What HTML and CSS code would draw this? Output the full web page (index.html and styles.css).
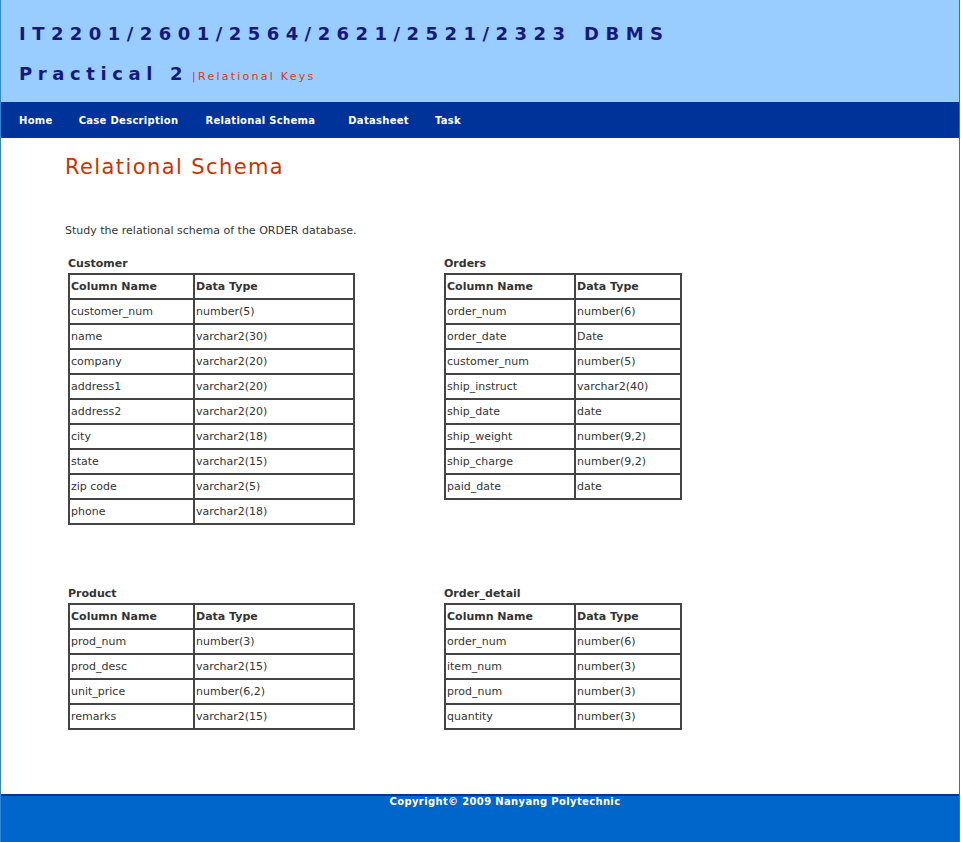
FILE: index.html
```html
<!DOCTYPE html>
<html>
<head>
<meta charset="utf-8">
<title>Relational Schema</title>
<link rel="stylesheet" href="styles.css">
</head>
<body>
<div class="page">
  <header class="masthead">
    <h1 class="course">IT2201/2601/2564/2621/2521/2323 DBMS</h1>
    <div class="practical"><span class="prac-title">Practical 2</span><span class="prac-sub">|Relational Keys</span></div>
  </header>
  <nav class="nav">
    <a class="nav-item" href="#">Home</a>
    <a class="nav-item" href="#">Case Description</a>
    <a class="nav-item" href="#">Relational Schema</a>
    <a class="nav-item" href="#">Datasheet</a>
    <a class="nav-item" href="#">Task</a>
  </nav>
  <main class="content">
    <h2 class="page-title">Relational Schema</h2>
    <p class="intro">Study the relational schema of the ORDER database.</p>
    <div class="schema">
      <section class="entity">
        <div class="entity-name">Customer</div>
        <table class="tbl tbl-a">
          <tr><th>Column Name</th><th>Data Type</th></tr>
          <tr><td>customer_num</td><td>number(5)</td></tr>
          <tr><td>name</td><td>varchar2(30)</td></tr>
          <tr><td>company</td><td>varchar2(20)</td></tr>
          <tr><td>address1</td><td>varchar2(20)</td></tr>
          <tr><td>address2</td><td>varchar2(20)</td></tr>
          <tr><td>city</td><td>varchar2(18)</td></tr>
          <tr><td>state</td><td>varchar2(15)</td></tr>
          <tr><td>zip code</td><td>varchar2(5)</td></tr>
          <tr><td>phone</td><td>varchar2(18)</td></tr>
        </table>
      </section>
      <section class="entity">
        <div class="entity-name">Orders</div>
        <table class="tbl tbl-b">
          <tr><th>Column Name</th><th>Data Type</th></tr>
          <tr><td>order_num</td><td>number(6)</td></tr>
          <tr><td>order_date</td><td>Date</td></tr>
          <tr><td>customer_num</td><td>number(5)</td></tr>
          <tr><td>ship_instruct</td><td>varchar2(40)</td></tr>
          <tr><td>ship_date</td><td>date</td></tr>
          <tr><td>ship_weight</td><td>number(9,2)</td></tr>
          <tr><td>ship_charge</td><td>number(9,2)</td></tr>
          <tr><td>paid_date</td><td>date</td></tr>
        </table>
      </section>
      <section class="entity">
        <div class="entity-name">Product</div>
        <table class="tbl tbl-a">
          <tr><th>Column Name</th><th>Data Type</th></tr>
          <tr><td>prod_num</td><td>number(3)</td></tr>
          <tr><td>prod_desc</td><td>varchar2(15)</td></tr>
          <tr><td>unit_price</td><td>number(6,2)</td></tr>
          <tr><td>remarks</td><td>varchar2(15)</td></tr>
        </table>
      </section>
      <section class="entity">
        <div class="entity-name">Order_detail</div>
        <table class="tbl tbl-b">
          <tr><th>Column Name</th><th>Data Type</th></tr>
          <tr><td>order_num</td><td>number(6)</td></tr>
          <tr><td>item_num</td><td>number(3)</td></tr>
          <tr><td>prod_num</td><td>number(3)</td></tr>
          <tr><td>quantity</td><td>number(3)</td></tr>
        </table>
      </section>
    </div>
  </main>
  <footer class="footer">Copyright&copy; 2009 Nanyang Polytechnic</footer>
</div>
</body>
</html>
```

FILE: styles.css
```css
html, body {
  margin: 0;
  padding: 0;
  background: #ffffff;
}
body {
  font-family: "DejaVu Sans", Verdana, sans-serif;
  font-size: 11px;
  color: #333333;
}
.page {
  width: 958px;
  border-left: 1px solid #2f86d8;
  border-right: 1px solid #3a6fb0;
  display: flex;
  flex-direction: column;
  min-height: 842px;
}
.masthead {
  background: #99ccff;
  height: 102px;
  box-sizing: border-box;
  padding: 22px 0 0 18px;
}
.course {
  margin: 0;
  font-size: 18px;
  line-height: 24px;
  font-weight: bold;
  letter-spacing: 6.45px;
  color: #16197a;
}
.practical {
  margin-top: 17px;
  display: flex;
  align-items: baseline;
}
.prac-title {
  font-size: 18px;
  font-weight: bold;
  letter-spacing: 5.6px;
  color: #16197a;
}
.prac-sub {
  margin-left: 4px;
  font-size: 11px;
  letter-spacing: 2.25px;
  color: #d43a12;
}
.nav {
  background: #003399;
  height: 36px;
  display: flex;
  align-items: center;
  padding-left: 18px;
}
.nav-item {
  color: #ffffff;
  text-decoration: none;
  font-weight: bold;
  font-size: 10px;
  letter-spacing: 0.3px;
  margin-right: 26px;
}
.nav-item:nth-child(2) { margin-right: 27px; }
.nav-item:nth-child(3) { margin-right: 33px; }
.nav-item:nth-child(4) { margin-right: 26px; }
.content {
  flex: 1;
  padding: 15px 0 61px 64px;
}
.page-title {
  margin: 0;
  font-size: 21px;
  line-height: 28px;
  font-weight: normal;
  letter-spacing: 1.4px;
  color: #cc3300;
}
.intro {
  margin: 42px 0 17px 0;
  line-height: 16px;
}
.schema {
  display: grid;
  grid-template-columns: 376px auto;
  row-gap: 61px;
  padding-left: 3px;
  justify-content: start;
}
.entity-name {
  font-weight: bold;
  line-height: 16px;
  margin-bottom: 1px;
}
.tbl {
  border: 1px solid #444444;
  border-spacing: 0;
  border-collapse: separate;
}
.tbl th, .tbl td {
  border: 1px solid #444444;
  height: 23px;
  padding: 0 1px;
  text-align: left;
  vertical-align: middle;
  box-sizing: border-box;
  font-size: 11px;
}
.tbl th { font-weight: bold; }
.tbl-a th:first-child { width: 125px; }
.tbl-a th:last-child { width: 160px; }
.tbl-b th:first-child { width: 130px; }
.tbl-b th:last-child { width: 106px; }
.tbl tr { height: 25px; }
.footer {
  background: #0066cc;
  border-top: 2px solid #003399;
  height: 46px;
  box-sizing: content-box;
  color: #ffffff;
  font-weight: bold;
  font-size: 10px;
  text-align: center;
  padding-left: 50px;
  line-height: 12px;
  padding-top: 0;
  letter-spacing: 0.35px;
}
```
